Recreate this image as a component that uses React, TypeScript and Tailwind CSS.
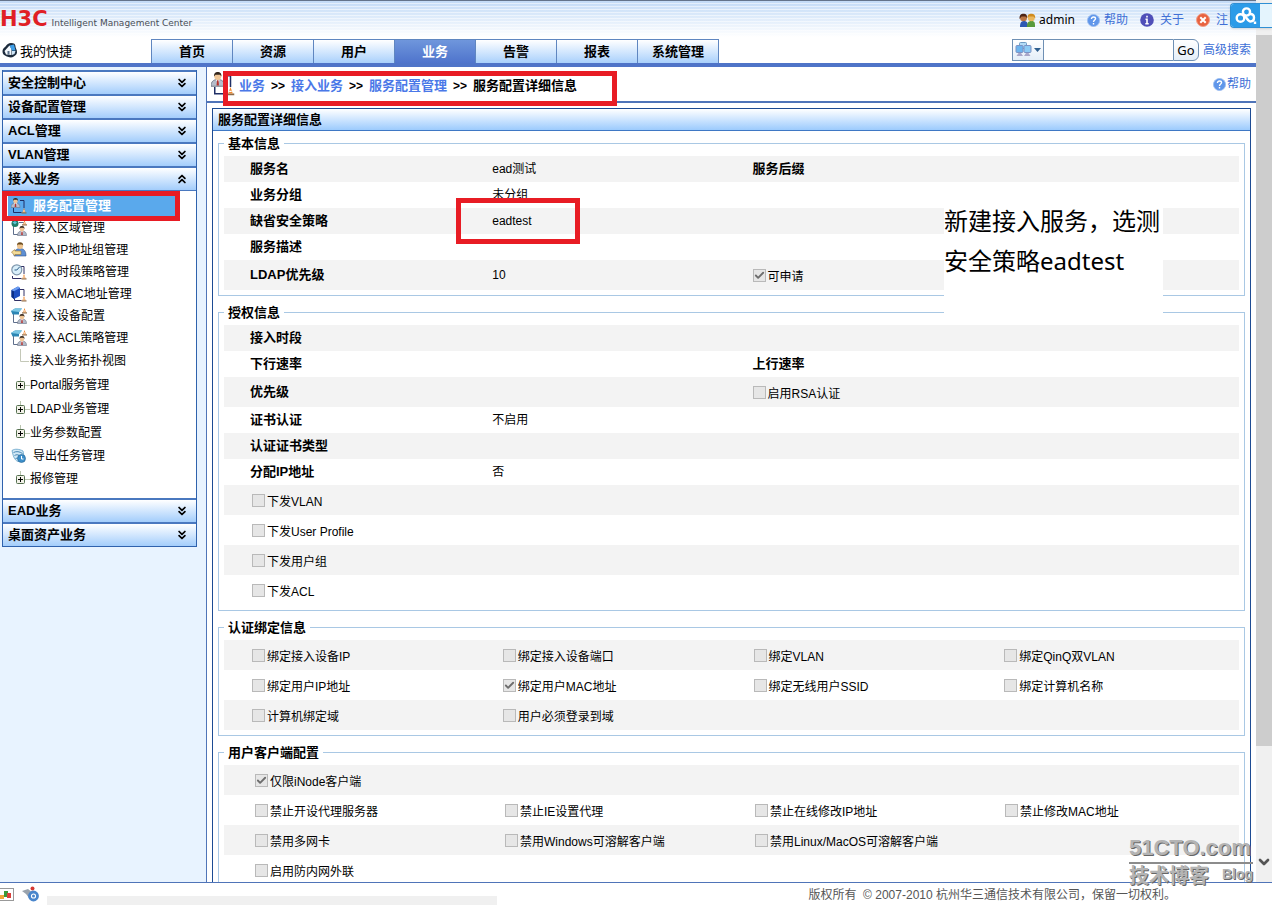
import { ReactNode } from "react";
import { Check, ChevronDown, ChevronsDown, ChevronsUp } from "lucide-react";

const tabs = ["首页", "资源", "用户", "业务", "告警", "报表", "系统管理"];

const closedTop = ["安全控制中心", "设备配置管理", "ACL管理", "VLAN管理"];
const closedBottom = ["EAD业务", "桌面资产业务"];

type CheckOption = { label: string; checked?: boolean };

const bindings: CheckOption[][] = [
  [{ label: "绑定接入设备IP" }, { label: "绑定接入设备端口" }, { label: "绑定VLAN" }, { label: "绑定QinQ双VLAN" }],
  [
    { label: "绑定用户IP地址" },
    { label: "绑定用户MAC地址", checked: true },
    { label: "绑定无线用户SSID" },
    { label: "绑定计算机名称" },
  ],
  [{ label: "计算机绑定域" }, { label: "用户必须登录到域" }],
];

const clientOptions: CheckOption[][] = [
  [{ label: "仅限iNode客户端", checked: true }],
  [
    { label: "禁止开设代理服务器" },
    { label: "禁止IE设置代理" },
    { label: "禁止在线修改IP地址" },
    { label: "禁止修改MAC地址" },
  ],
  [{ label: "禁用多网卡" }, { label: "禁用Windows可溶解客户端" }, { label: "禁用Linux/MacOS可溶解客户端" }],
  [{ label: "启用防内网外联" }],
];

/* ---------- icons ---------- */

function Person({ x, y }: { x: number; y: number }) {
  return (
    <g transform={`translate(${x} ${y})`}>
      <path d="M0 9.500c0-3 1.500-4.500 4.500-4.500S9 6.500 9 9.500z" fill="#b4bccb" stroke="#6b7484" strokeWidth=".6" />
      <path d="M3 5h3L4.500 7z" fill="#fff" />
      <path d="M4 5.500h1L5.300 9h-1.600z" fill="#b8322c" />
      <circle cx="4.500" cy="3" r="2.300" fill="#f0c696" />
      <path d="M2 3C2 .6 3 0 4.500 0S7 .6 7 3L6 1.800H3z" fill="#33261c" />
    </g>
  );
}

function Cone({ x, y }: { x: number; y: number }) {
  return (
    <g transform={`translate(${x} ${y})`}>
      <path d="M0 5.500h5V4.300H0z" fill="#8d6a48" />
      <path d="M1 4.300 2.500 0 4 4.300z" fill="#ee8b33" />
      <path d="M1.700 2.500h1.600v.9H1.500z" fill="#fff" />
    </g>
  );
}

function ServiceIcon({ size = 16 }: { size?: number }) {
  return (
    <svg width={size} height={size} viewBox="0 0 16 16" className="shrink-0">
      <path d="M2.500 10v4.500h8M9 2.500h4V10" fill="none" stroke="#1f2f66" />
      <Person x={0} y={0} />
      <Cone x={10.5} y={10} />
    </svg>
  );
}

function RegionIcon() {
  return (
    <svg width="16" height="16" viewBox="0 0 16 16">
      <path d="M2.500 6v8.500H8M8 2.500h5" fill="none" stroke="#5f6f8c" />
      <circle cx="4" cy="3.500" r="3.500" fill="#1e7d6b" />
      <path d="M1.500 2.500 4 1l2 1.500-2 2z" fill="#5cc3d8" />
      <Cone x={11} y={0} />
      <Person x={6.5} y={6} />
    </svg>
  );
}

function IpIcon() {
  return (
    <svg width="16" height="16" viewBox="0 0 16 16">
      <path d="M3 14c0-5 2-7.500 6-7.500s6 2.500 6 7.500z" fill="#5d8fd4" stroke="#34568c" strokeWidth=".6" />
      <circle cx="9" cy="4" r="3" fill="#eec48f" />
      <path d="M6 3.500C6 1 7 .3 9 .3s3.200.7 3.200 3.200L11 2.500H7z" fill="#6b4a1c" />
      <path d="M.5 10 4 7.500v1.500h6v3.500H4V14z" fill="#f4dc98" stroke="#98793a" strokeWidth=".6" />
    </svg>
  );
}

function ClockIcon() {
  return (
    <svg width="16" height="16" viewBox="0 0 16 16">
      <path d="M1.500 12v2.500h9M9 2.500h4V10" fill="none" stroke="#303064" />
      <circle cx="5.800" cy="5.800" r="5" fill="#d9effa" stroke="#7f97ad" strokeWidth="1.200" />
      <path d="M5.800 6 8.500 3M5.800 6H3.500" stroke="#2a5b86" fill="none" />
      <Cone x={10.5} y={10} />
    </svg>
  );
}

function MacIcon() {
  return (
    <svg width="16" height="16" viewBox="0 0 16 16">
      <path d="M3.500 10v4.500h7M9 3.500h4V10" fill="none" stroke="#303064" />
      <path d="M.5 4 7 .5l2 1.500v8L3 13 .5 11z" fill="#1f4fc0" />
      <path d="M.5 4 3 5.200V13L.5 11z" fill="#0d2f86" />
      <path d="M.5 4 7 .5l2 1.500-6 3.200z" fill="#6c9df0" />
      <Cone x={10.5} y={10} />
    </svg>
  );
}

function DeviceIcon() {
  return (
    <svg width="16" height="16" viewBox="0 0 16 16">
      <path d="M2.500 5v9.500H8" fill="none" stroke="#5f6f8c" />
      <path d="m0 3 4-2.500h7L8 4v2.500H1.500z" fill="#2c86b4" />
      <path d="m0 3 4-2.500h7L8 4z" fill="#7cc7e4" />
      <Cone x={11} y={0} />
      <Person x={6.5} y={6} />
    </svg>
  );
}

function ExportIcon() {
  return (
    <svg width="16" height="16" viewBox="0 0 16 16">
      <path d="M1 2.500C4 .5 8 1 12 3l1 6-6 4.500C3 12 2 7 1 2.500z" fill="#d3e9f6" stroke="#5e9fc6" strokeWidth=".8" />
      <path d="M2.500 4.500c3-1.500 6-1 9 1M3.500 7.500c2-1 3-1 5 0M4.500 10.500l2-.5" fill="none" stroke="#4787b4" />
      <circle cx="10.500" cy="10.500" r="4" fill="#3d8fca" stroke="#23618f" strokeWidth=".6" />
      <path d="M10.500 8v3h2" fill="none" stroke="#fff" />
    </svg>
  );
}

function TreeLine() {
  return (
    <svg width="14" height="24" viewBox="0 0 14 24">
      <path d="M4.500 0v12.500H13" fill="none" stroke="#c4c8b8" />
    </svg>
  );
}

function TreePlus() {
  return (
    <svg width="14" height="22" viewBox="0 0 14 22">
      <path d="M4.500 3v5M9 11.500h5" fill="none" stroke="#b9c4ae" />
      <rect x=".5" y="7.500" width="8" height="8" rx="1" fill="#f2f1e8" stroke="#55704f" />
      <path d="M2 11.500h5M4.500 9v5" stroke="#000" />
    </svg>
  );
}

function HomeIcon() {
  return (
    <svg width="16" height="17" viewBox="0 0 16 17">
      <path d="M.5 9C.5 7 2 6 3.500 4.500 5 2.500 6.500 1 9 1c3 0 4.500 1 4.500 3.500 0 2 1.500 3 1.500 5.500 0 3-2 3.500-4 5-2 1-6 0-8-1.500C1 12.500.5 11 .5 9z" fill="#1d2b3c" />
      <path d="M2.500 9 7.500 3.500 9.500 7v6L4 12.500z" fill="#f3f8fc" />
      <path d="M7.500 3.500 12 2.500l1.500 6L10 8.500z" fill="#3f9fe8" />
      <path d="m10 9 3.500 0-1 3-2.500 1z" fill="#cfe6f8" />
      <path d="M5.500 9h2v3.800l-2-.3z" fill="#5a6f88" />
    </svg>
  );
}

function UsersIcon() {
  return (
    <svg width="17" height="15" viewBox="0 0 17 15">
      <path d="M1 14c0-4 1-6 4-6s4 2 4 6z" fill="#2c59b4" />
      <circle cx="4.500" cy="4.800" r="3.500" fill="#b87343" />
      <path d="M.5 6C.5 1.800 2 .8 4.500.8S8 1.500 8 5L6.500 3.500h-4z" fill="#4c2416" />
      <path d="M8 14c0-4 1-6 4.500-6S16 10 16 14z" fill="#589a3c" />
      <circle cx="12.300" cy="4.800" r="3.500" fill="#eab75e" />
      <path d="M8.500 5C8.500 1.500 10 .8 12.300.8s4 .7 4 4.700L14.500 3.500H10z" fill="#d08b1e" />
    </svg>
  );
}

function Dot({ kind, size }: { kind: "help" | "info" | "close"; size: number }) {
  return (
    <svg width={size} height={size} viewBox="0 0 14 14" className="shrink-0">
      {kind === "help" && (
        <>
          <circle cx="7" cy="7" r="6.500" fill="#5f96ea" stroke="#9dbdf0" />
          <path
            d="M4.800 5.500C4.800 4 5.800 3.300 7 3.300s2.200.7 2.200 1.900S7 6.800 7 8.500M7 9.700v1.600"
            fill="none"
            stroke="#fff"
            strokeWidth="1.500"
          />
        </>
      )}
      {kind === "info" && (
        <>
          <circle cx="7" cy="7" r="6.800" fill="#4f4fb8" />
          <path d="M7 2.800v1.700M5.500 6.200H7v4.300M5.300 10.800h3.400" fill="none" stroke="#fff" strokeWidth="1.600" />
        </>
      )}
      {kind === "close" && (
        <>
          <circle cx="7" cy="7" r="6.500" fill="#e8623f" stroke="#f0a08a" />
          <path d="m4.300 4.300 5.400 5.400M9.700 4.300 4.300 9.700" stroke="#fff" strokeWidth="2" />
        </>
      )}
    </svg>
  );
}

function NetworkIcon() {
  return (
    <svg width="17" height="16" viewBox="0 0 17 16">
      <rect x="4.500" y=".5" width="7" height="6" rx="1" fill="#b4dcf6" stroke="#6f9cc4" />
      <rect x="1" y="3.500" width="7" height="7" rx="1" fill="#6db4ee" stroke="#7d93c4" />
      <rect x="9" y="3.500" width="7" height="7" rx="1" fill="#8ccaf4" stroke="#7d93c4" />
      <path d="M1.500 14h6.500L6 11H3.500zM9 14h6.500L13.500 11H11z" fill="#a9a7c9" />
    </svg>
  );
}

/* ---------- building blocks ---------- */

function CheckItem({ label, checked = false }: CheckOption) {
  return (
    <label className="flex items-center gap-0.5 whitespace-nowrap">
      <span className="grid size-[13px] shrink-0">
        <input
          type="checkbox"
          defaultChecked={checked}
          disabled
          className="col-start-1 row-start-1 size-[13px] appearance-none border border-[#b9b9b9] bg-[#e6e6e6]"
        />
        {checked && <Check className="col-start-1 row-start-1 size-[11px] place-self-center text-[#6d6d6d]" strokeWidth={4} />}
      </span>
      <span className="pt-1">{label}</span>
    </label>
  );
}

function Group({ title, children }: { title: string; children: ReactNode }) {
  return (
    <fieldset className="min-w-0 border border-[#a9c8e4] px-[5px] pb-[5px]">
      <legend className="h-[25px] px-1 text-[13px] leading-[25px] font-bold">{title}</legend>
      <div>{children}</div>
    </fieldset>
  );
}

function Row({ label, value, extra, tall }: { label?: ReactNode; value?: string; extra?: ReactNode; tall?: boolean }) {
  return (
    <div
      className={`grid grid-cols-[242fr_260fr_486fr] items-center pl-[26px] odd:bg-[#f3f3f3] ${tall ? "h-[30px]" : "h-[26px]"}`}
    >
      <div className="text-[13px] font-bold">{label}</div>
      <div>{value}</div>
      <div>{extra}</div>
    </div>
  );
}

function CheckRows({ rows, inset }: { rows: CheckOption[][]; inset?: boolean }) {
  return (
    <div>
      {rows.map((row) => (
        <div
          key={row[0].label}
          className={`grid h-[30px] grid-cols-4 items-center odd:bg-[#f3f3f3] ${inset ? "pl-[15px]" : "pl-3"}`}
        >
          {row.map((item) => (
            <div key={item.label} className="pl-4">
              <CheckItem {...item} />
            </div>
          ))}
        </div>
      ))}
    </div>
  );
}

function MenuHead({ title, open }: { title: string; open?: boolean }) {
  const Icon = open ? ChevronsUp : ChevronsDown;
  return (
    <button className="flex h-6 w-full items-center justify-between border-t-2 border-[#4a78bf] bg-linear-to-b from-white to-[#a3cdfb] pr-[7px] pl-[5px] text-[13px] font-bold">
      {title}
      <Icon className="size-[14px]" strokeWidth={3} />
    </button>
  );
}

function MenuItem({ icon, children }: { icon: ReactNode; children: ReactNode }) {
  return (
    <li className="h-[22px]">
      <a href="#" className="flex h-full items-center gap-1.5 pl-2">
        {icon}
        {children}
      </a>
    </li>
  );
}

function TreeItem({ leaf, children }: { leaf?: boolean; children: ReactNode }) {
  return (
    <li className="h-6">
      <a href="#" className="flex h-full items-center pl-[13px]">
        {leaf ? <TreeLine /> : <TreePlus />}
        {children}
      </a>
    </li>
  );
}

function Header() {
  return (
    <header className="flex h-[37px] shrink-0 items-center justify-between border-t border-[#64748b] bg-[repeating-linear-gradient(to_bottom,transparent_0_2px,rgba(255,255,255,0.5)_2px_3px),linear-gradient(to_bottom,#c3dbf7,#ffffff)]">
      <div className="flex items-baseline gap-1">
        <span className="font-['DejaVu_Sans',sans-serif] text-[21px] leading-6 font-bold text-[#e01f26]">H3C</span>
        <span className="font-['DejaVu_Sans',sans-serif] text-[9px] text-[#4a4f58]">Intelligent Management Center</span>
      </div>
      <nav className="flex items-center gap-3 pt-0.5 pr-7 text-[#4070d6]">
        <span className="flex items-center gap-[3px] font-['Noto_Sans',sans-serif] text-black">
          <UsersIcon />
          admin
        </span>
        <a href="#" className="flex items-center gap-1">
          <Dot kind="help" size={13} />
          帮助
        </a>
        <a href="#" className="flex items-center gap-1.5">
          <Dot kind="info" size={14} />
          关于
        </a>
        <a href="#" className="flex items-center gap-1.5">
          <Dot kind="close" size={14} />注
        </a>
      </nav>
    </header>
  );
}

function TabBar() {
  return (
    <div className="flex h-[30px] shrink-0 items-end border-b-4 border-[#4f74c8] bg-white">
      <a href="#" className="flex w-[151px] shrink-0 items-center gap-0.5 self-center pl-0.5 text-[13px]">
        <HomeIcon />
        <span className="pt-1">我的快捷</span>
      </a>
      <nav className="flex h-6 border-t border-l border-[#5f86c0]">
        {tabs.map((tab) => (
          <a
            key={tab}
            href="#"
            className={`flex w-[81px] items-center justify-center border-r border-[#5f86c0] text-[13px] font-bold ${
              tab === "业务" ? "bg-linear-to-b from-[#6f96dc] to-[#4f74cc] text-white" : "bg-linear-to-b from-white to-[#a9d0fb]"
            }`}
          >
            {tab}
          </a>
        ))}
      </nav>
      <form className="mr-[5px] ml-auto flex h-[22px] items-center self-center" onSubmit={(e) => e.preventDefault()}>
        <button
          type="button"
          aria-label="搜索类型"
          className="flex h-full w-8 items-center gap-0.5 border border-[#6f90b4] bg-linear-to-b from-white to-[#e4eef8] pl-0.5"
        >
          <NetworkIcon />
          <svg width="7" height="4" viewBox="0 0 7 4">
            <path d="M0 0h7L3.500 4z" fill="#2f5f8f" />
          </svg>
        </button>
        <input aria-label="搜索" className="h-full w-[129px] border-y border-[#6f90b4] bg-white px-1 outline-none" />
        <button className="h-full w-[26px] rounded-r-md border border-[#6f90b4] bg-linear-to-b from-white to-[#e4eef8] font-['Noto_Sans',sans-serif] text-[13px] leading-5">
          Go
        </button>
        <a href="#" className="ml-1 text-[#4070d6]">
          高级搜索
        </a>
      </form>
    </div>
  );
}

function Sidebar() {
  return (
    <aside className="w-[206px] shrink-0 bg-[#e8f3ff] pt-[3px] pl-0.5">
      <div className="w-[195px] border-x border-b border-[#2f62ad]">
        {closedTop.map((title) => (
          <MenuHead key={title} title={title} />
        ))}
        <MenuHead title="接入业务" open />
        <ul className="border-t border-[#4a78bf] bg-white pt-1 pb-[7px]">
          <li className="relative h-[22px]">
            <a
              href="#"
              className="mr-5 ml-[5px] flex h-full items-center gap-1.5 bg-[#5aa9ec] pl-[3px] text-[13px] font-bold text-white"
            >
              <ServiceIcon />
              服务配置管理
            </a>
            <div className="pointer-events-none absolute -top-1 -left-px h-[30px] w-[178px] border-[5px] border-[#e81c24]" />
          </li>
          <MenuItem icon={<RegionIcon />}>接入区域管理</MenuItem>
          <MenuItem icon={<IpIcon />}>接入IP地址组管理</MenuItem>
          <MenuItem icon={<ClockIcon />}>接入时段策略管理</MenuItem>
          <MenuItem icon={<MacIcon />}>接入MAC地址管理</MenuItem>
          <MenuItem icon={<DeviceIcon />}>接入设备配置</MenuItem>
          <MenuItem icon={<DeviceIcon />}>接入ACL策略管理</MenuItem>
          <TreeItem leaf>接入业务拓扑视图</TreeItem>
          <TreeItem>Portal服务管理</TreeItem>
          <TreeItem>LDAP业务管理</TreeItem>
          <TreeItem>业务参数配置</TreeItem>
          <MenuItem icon={<ExportIcon />}>导出任务管理</MenuItem>
          <TreeItem>报修管理</TreeItem>
        </ul>
        {closedBottom.map((title) => (
          <MenuHead key={title} title={title} />
        ))}
      </div>
    </aside>
  );
}

function Breadcrumb() {
  return (
    <div className="relative flex h-9 shrink-0 items-center border-b-2 border-[#4f74b8] pr-[5px] pl-1">
      <div className="-mr-2">
        <ServiceIcon size={24} />
      </div>
      <nav className="ml-3 flex items-center gap-1.5 pt-1 text-[13px] font-bold text-[#4a78e8]">
        <a href="#">业务</a>
        <span className="text-[12px] text-black">&gt;&gt;</span>
        <a href="#">接入业务</a>
        <span className="text-[12px] text-black">&gt;&gt;</span>
        <a href="#">服务配置管理</a>
        <span className="text-[12px] text-black">&gt;&gt;</span>
        <span className="text-black">服务配置详细信息</span>
      </nav>
      <a href="#" className="ml-auto flex items-center gap-px text-[#4070d6]">
        <Dot kind="help" size={13} />
        帮助
      </a>
      <div className="pointer-events-none absolute top-1 left-4 h-[35px] w-[394px] border-[5px] border-[#e81c24]" />
    </div>
  );
}

function Watermark() {
  return (
    <div className="pointer-events-none absolute right-[19px] bottom-[17px] w-[124px] font-bold text-[#b4b4b4] [text-shadow:1px_1px_0_#666]">
      <div className="border-b-2 border-[#8c8c8c] text-[22px] leading-7">51CTO.com</div>
      <div className="flex items-start justify-between">
        <span className="text-[20px] leading-6">技术博客</span>
        <span className="text-[14px] leading-5">Blog</span>
      </div>
    </div>
  );
}

export default function App() {
  return (
    <div className="relative flex h-screen flex-col overflow-hidden bg-white font-['Liberation_Sans','Noto_Sans_CJK_SC',sans-serif] text-[12px] leading-4 text-black">
      <div className="flex min-h-0 flex-1">
        <div className="flex min-w-0 flex-1 flex-col">
          <Header />
          <TabBar />
          <div className="flex min-h-0 flex-1">
            <Sidebar />
            <main className="relative min-w-0 flex-1 overflow-hidden border-l border-[#4f74b8]">
              <Breadcrumb />
              <section className="mx-[5px] mt-[5px] border border-[#1d4b93]">
                <h1 className="h-[22px] border-b border-[#3f78c4] bg-linear-to-b from-white to-[#9ccbfd] pl-[5px] text-[13px] leading-[22px] font-bold">
                  服务配置详细信息
                </h1>
                <div className="flex flex-col gap-1 px-[5px] pb-[5px]">
                  <Group title="基本信息">
                    <Row label="服务名" value="ead测试" extra={<b className="text-[13px]">服务后缀</b>} />
                    <Row label="业务分组" value="未分组" />
                    <Row label="缺省安全策略" value="eadtest" />
                    <Row label="服务描述" />
                    <Row label="LDAP优先级" value="10" extra={<CheckItem label="可申请" checked />} tall />
                  </Group>
                  <Group title="授权信息">
                    <Row label="接入时段" />
                    <Row label="下行速率" extra={<b className="text-[13px]">上行速率</b>} />
                    <Row label="优先级" extra={<CheckItem label="启用RSA认证" />} tall />
                    <Row label="证书认证" value="不启用" />
                    <Row label="认证证书类型" />
                    <Row label="分配IP地址" value="否" />
                    <CheckRows
                      rows={[[{ label: "下发VLAN" }], [{ label: "下发User Profile" }], [{ label: "下发用户组" }], [{ label: "下发ACL" }]]}
                    />
                  </Group>
                  <Group title="认证绑定信息">
                    <CheckRows rows={bindings} />
                  </Group>
                  <Group title="用户客户端配置">
                    <CheckRows rows={clientOptions} inset />
                  </Group>
                </div>
              </section>

              {/* notes drawn over the form */}
              <div className="pointer-events-none absolute top-[131px] left-[249px] h-[46px] w-[124px] border-[5px] border-[#e81c24]" />
              <p className="absolute top-[134px] right-[93px] h-[114px] w-[219px] bg-white font-['Noto_Sans','Noto_Sans_CJK_SC',sans-serif] text-[24px] leading-10 whitespace-nowrap">
                新建接入服务，选测
                <br />
                安全策略eadtest
              </p>
            </main>
          </div>
        </div>

        {/* page scroll bar */}
        <div className="flex w-4 shrink-0 flex-col bg-[#f0f0f0] pt-[35px]">
          <div className="h-[84%] bg-[#cdcdcd]" />
          <ChevronDown className="mt-auto mb-3 size-4 shrink-0 text-[#555]" strokeWidth={4} />
        </div>
      </div>

      <footer className="flex h-[23px] shrink-0 items-center border-t border-[#4f74b8] pr-24 text-[#555]">
        <svg width="14" height="13" viewBox="0 0 14 13">
          <rect x="-1" y=".5" width="14.500" height="12" fill="#fff" stroke="#999" />
          <path d="M0 7h4v4H0z" fill="#f0a63c" />
          <path d="M4 3h4v6H4z" fill="#3a9a3a" />
          <path d="M7 5h4v5H7z" fill="#d8403c" />
        </svg>
        <svg width="18" height="16" viewBox="0 0 18 16" className="ml-2">
          <path d="m0 5 6-2 5 4-4 5-3-4z" fill="#9aa3ad" />
          <circle cx="10.500" cy="2.500" r="2" fill="#d43a34" />
          <circle cx="11.500" cy="10" r="4" fill="#fff" stroke="#4a86cc" strokeWidth="2.800" />
          <circle cx="11.500" cy="10" r="1.500" fill="#4a86cc" />
        </svg>
        <div className="ml-[7px] h-[9px] w-[450px] self-end bg-[#f0f0f0]" />
        <p className="ml-auto pt-0.5">版权所有 &nbsp;© 2007-2010 杭州华三通信技术有限公司，保留一切权利。</p>
      </footer>

      {/* cloud drive widget */}
      <div className="absolute top-[3px] right-0 flex h-[25px] w-[42px] overflow-hidden rounded-l-sm border border-r-0 border-[#2f8fd4] bg-[#e4f4fd] shadow">
        <div className="flex w-[29px] items-center justify-center bg-[#2b9be8]">
          <svg width="22" height="18" viewBox="0 0 22 18" fill="none" stroke="#fff" strokeWidth="2.400">
            <circle cx="11.500" cy="5" r="3.600" />
            <circle cx="5.500" cy="11" r="3.800" />
            <path d="M8.500 8.500c2.500 0 4 6 7 6 2 0 3.500-1.500 3.500-4 0-2.500-1.500-3.500-4-3.500" />
            <path d="M20 14.500v2.500" />
          </svg>
        </div>
      </div>
      <Watermark />
    </div>
  );
}
